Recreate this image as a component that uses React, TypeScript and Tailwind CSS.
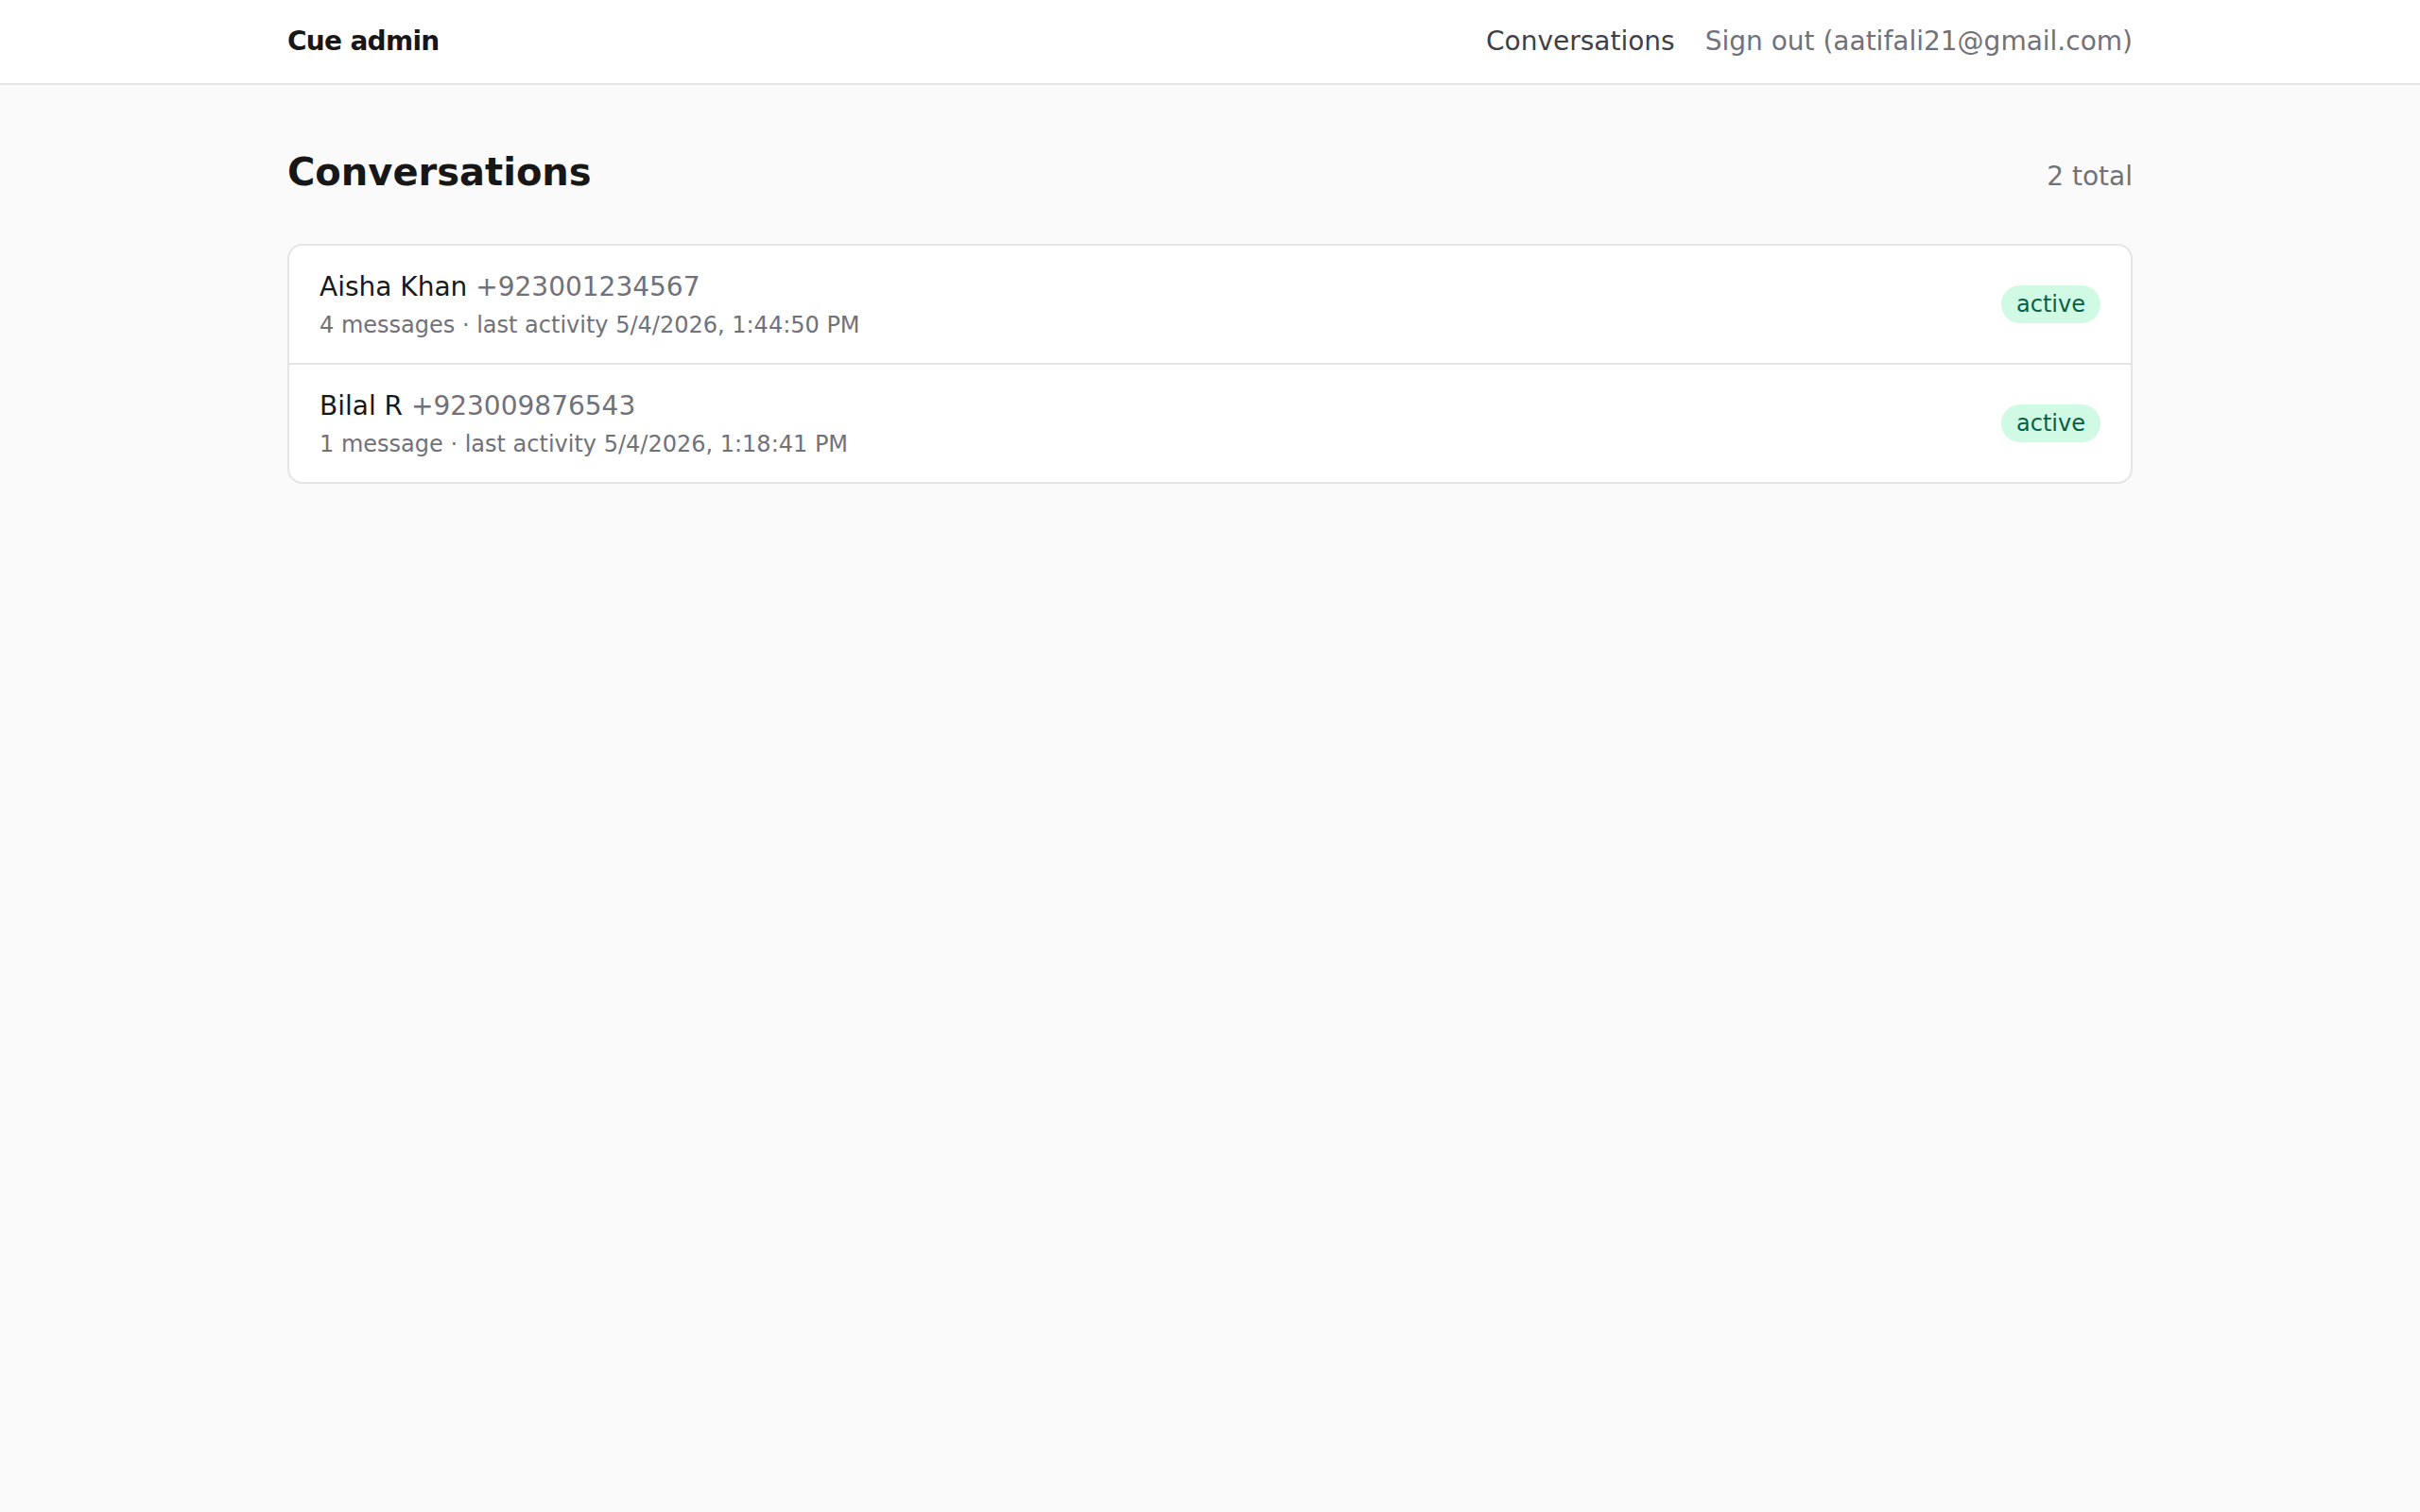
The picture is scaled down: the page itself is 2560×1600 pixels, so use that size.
const conversations = [
  {
    id: 'c1',
    name: 'Aisha Khan',
    phone: '+923001234567',
    messages: 4,
    lastActivity: '5/4/2026, 1:44:50 PM',
    status: 'active',
  },
  {
    id: 'c2',
    name: 'Bilal R',
    phone: '+923009876543',
    messages: 1,
    lastActivity: '5/4/2026, 1:18:41 PM',
    status: 'active',
  },
];

function Header() {
  return (
    <header className="bg-white border-b-2 border-[#e5e5e5]">
      <div className="max-w-[2048px] mx-auto px-12 py-6 flex items-center justify-between">
        <a href="#" className="text-[28px] leading-[40px] font-bold tracking-tight text-[#171717]">
          Cue admin
        </a>
        <nav className="flex items-center gap-8 text-[28px] leading-[40px]">
          <a href="#" className="text-[#3f3f46]">
            Conversations
          </a>
          <button className="text-[#71717a]">Sign out (aatifali21@gmail.com)</button>
        </nav>
      </div>
    </header>
  );
}

export default function App() {
  return (
    <div className="min-h-screen bg-[#fafafa] font-['DejaVu_Sans',sans-serif]">
      <Header />
      <main className="max-w-[2048px] mx-auto px-12 py-16">
        {/* Title row */}
        <div className="flex items-baseline justify-between mb-12">
          <h1 className="text-[40px] leading-[56px] font-bold text-[#171717]">Conversations</h1>
          <span className="text-[28px] leading-[40px] text-[#71717a]">{conversations.length} total</span>
        </div>

        {/* Conversation list */}
        <ul className="bg-white border-2 border-[#e5e5e5] rounded-2xl overflow-hidden divide-y-2 divide-[#e5e5e5]">
          {conversations.map((c) => (
            <li key={c.id} className="flex items-center justify-between px-8 py-6">
              <div>
                <div className="text-[28px] leading-[40px]">
                  <span className="text-[#18181b]">{c.name}</span>{' '}
                  <span className="text-[#71717a]">{c.phone}</span>
                </div>
                <div className="mt-1 text-[24px] leading-[32px] text-[#71717a]">
                  {c.messages} {c.messages === 1 ? 'message' : 'messages'} · last activity {c.lastActivity}
                </div>
              </div>
              <span className="rounded-full bg-[#d1fae5] text-[#065f46] px-4 py-1 text-[24px] leading-[32px]">
                {c.status}
              </span>
            </li>
          ))}
        </ul>
      </main>
    </div>
  );
}
